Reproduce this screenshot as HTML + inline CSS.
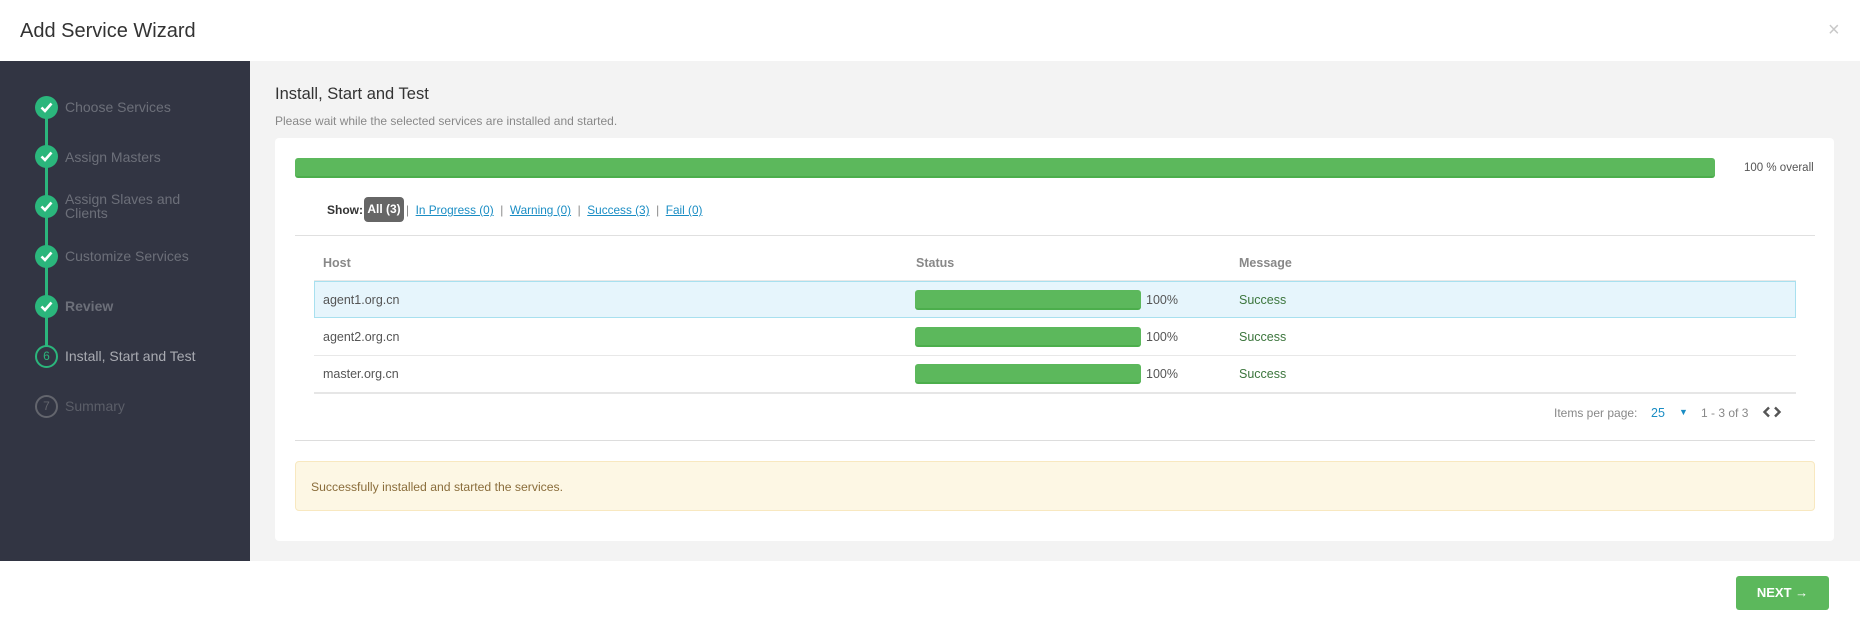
<!DOCTYPE html>
<html><head><meta charset="utf-8"><style>
*{box-sizing:border-box;margin:0;padding:0}
body{width:1860px;height:625px;position:relative;background:#fff;font-family:"Liberation Sans",sans-serif;overflow:hidden}
.a{position:absolute;white-space:nowrap}
.title{left:20px;top:20px;font-size:20px;color:#333}
.close{left:1828px;top:19px;font-size:20px;color:#c8c8c8}
.side{left:0;top:61px;width:250px;height:500px;background:#323543}
.main{left:250px;top:61px;width:1610px;height:500px;background:#f3f3f3}
.line{left:45px;top:107px;width:3px;height:250px;background:#2bb67c}
.c{width:23px;height:23px;border-radius:50%;background:#2bb67c;left:35px}
.c svg{position:absolute;left:5px;top:6px}
.st{left:65px;font-size:14px;color:#6c6f79}
.n{width:23px;height:23px;border-radius:50%;left:35px;border:2px solid #2bb67c;color:#2bb67c;font-size:12px;text-align:center;line-height:19px;background:#323543}
.card{left:275px;top:138px;width:1559px;height:403px;background:#fff;border-radius:4px}
.bar{background:#5cb85c;border-radius:3px;border-bottom:2px solid #4cae4c}
a{color:#1a8dc4;text-decoration:underline}
.sep{color:#888}
.th{top:256px;font-size:12.5px;color:#888;font-weight:bold}
.td{font-size:12.5px;color:#555}
.ok{font-size:12.5px;color:#3c763d}
.hl{left:314px;top:281px;width:1482px;height:37px;background:#e6f5fc;border:1px solid #a8e0ef}
.rl{left:314px;width:1482px;height:1px;background:#e8e8e8}
</style></head><body>
<div class="a title">Add Service Wizard</div>
<div class="a close">×</div>
<div class="a side"></div>
<div class="a main"></div>
<div class="a line"></div>

<div class="a c" style="top:96px"><svg width="13" height="11" viewBox="0 0 13 11"><path d="M1.5 5.5l3.5 3.5 6.5-7.5" stroke="#fff" stroke-width="2.6" fill="none"/></svg></div>
<div class="a st" style="top:99px">Choose Services</div>
<div class="a c" style="top:145px"><svg width="13" height="11" viewBox="0 0 13 11"><path d="M1.5 5.5l3.5 3.5 6.5-7.5" stroke="#fff" stroke-width="2.6" fill="none"/></svg></div>
<div class="a st" style="top:149px">Assign Masters</div>
<div class="a c" style="top:195px"><svg width="13" height="11" viewBox="0 0 13 11"><path d="M1.5 5.5l3.5 3.5 6.5-7.5" stroke="#fff" stroke-width="2.6" fill="none"/></svg></div>
<div class="a st" style="top:192px;line-height:14px">Assign Slaves and<br>Clients</div>
<div class="a c" style="top:245px"><svg width="13" height="11" viewBox="0 0 13 11"><path d="M1.5 5.5l3.5 3.5 6.5-7.5" stroke="#fff" stroke-width="2.6" fill="none"/></svg></div>
<div class="a st" style="top:248px">Customize Services</div>
<div class="a c" style="top:295px"><svg width="13" height="11" viewBox="0 0 13 11"><path d="M1.5 5.5l3.5 3.5 6.5-7.5" stroke="#fff" stroke-width="2.6" fill="none"/></svg></div>
<div class="a st" style="top:298px;font-weight:bold">Review</div>
<div class="a n" style="top:345px">6</div>
<div class="a st" style="top:348px;color:#a9abb2">Install, Start and Test</div>
<div class="a n" style="top:395px;border-color:#63656d;color:#63656d">7</div>
<div class="a st" style="top:398px;color:#5b5e68">Summary</div>

<div class="a" style="left:275px;top:85px;font-size:16.5px;color:#333">Install, Start and Test</div>
<div class="a" style="left:275px;top:114px;font-size:12px;color:#888">Please wait while the selected services are installed and started.</div>
<div class="a card"></div>
<div class="a bar" style="left:295px;top:158px;width:1420px;height:20px"></div>
<div class="a" style="left:1744px;top:162px;font-size:11.5px;color:#555">100 % overall</div>

<div class="a" style="left:327px;top:203px;font-size:12px;color:#333;font-weight:bold">Show:</div>
<div class="a" style="left:364px;top:197px;width:40px;height:25px;background:#666;border-radius:4px;color:#fff;font-size:12px;font-weight:bold;text-align:center;line-height:25px">All (3)</div>
<div class="a" style="left:406px;top:203px;font-size:11.8px"><span class="sep">|</span>&nbsp; <a>In Progress (0)</a> &nbsp;<span class="sep">|</span>&nbsp; <a>Warning (0)</a> &nbsp;<span class="sep">|</span>&nbsp; <a>Success (3)</a> &nbsp;<span class="sep">|</span>&nbsp; <a>Fail (0)</a></div>
<div class="a" style="left:295px;top:235px;width:1520px;height:1px;background:#e0e0e0"></div>

<div class="a th" style="left:323px">Host</div>
<div class="a th" style="left:916px">Status</div>
<div class="a th" style="left:1239px">Message</div>
<div class="a rl" style="top:280px"></div>
<div class="a hl"></div>
<div class="a td" style="left:323px;top:293px">agent1.org.cn</div>
<div class="a bar" style="left:915px;top:290px;width:226px;height:20px"></div>
<div class="a td" style="left:1146px;top:293px">100%</div>
<div class="a ok" style="left:1239px;top:293px">Success</div>
<div class="a td" style="left:323px;top:330px">agent2.org.cn</div>
<div class="a bar" style="left:915px;top:327px;width:226px;height:20px"></div>
<div class="a td" style="left:1146px;top:330px">100%</div>
<div class="a ok" style="left:1239px;top:330px">Success</div>
<div class="a rl" style="top:355px"></div>
<div class="a td" style="left:323px;top:367px">master.org.cn</div>
<div class="a bar" style="left:915px;top:364px;width:226px;height:20px"></div>
<div class="a td" style="left:1146px;top:367px">100%</div>
<div class="a ok" style="left:1239px;top:367px">Success</div>
<div class="a rl" style="top:392px;height:2px;background:#e6e6e6"></div>

<div class="a" style="left:1554px;top:406px;font-size:12px;color:#888">Items per page:</div>
<div class="a" style="left:1651px;top:406px;font-size:12.5px;color:#1a8dc4">25</div>
<div class="a" style="left:1679px;top:407px;font-size:9px;color:#1a8dc4">▼</div>
<div class="a" style="left:1701px;top:406px;font-size:12px;color:#888">1 - 3 of 3</div>
<svg class="a" style="left:1762px;top:406px" width="20" height="12" viewBox="0 0 20 12"><path d="M7 1.5L2.5 6 7 10.5M13 1.5L17.5 6 13 10.5" stroke="#555" stroke-width="2.4" fill="none"/></svg>
<div class="a" style="left:295px;top:440px;width:1520px;height:1px;background:#ddd"></div>

<div class="a" style="left:295px;top:461px;width:1520px;height:50px;background:#fdf7e4;border:1px solid #f8e8c0;border-radius:4px"></div>
<div class="a" style="left:311px;top:480px;font-size:12.2px;color:#8a6d3b">Successfully installed and started the services.</div>

<div class="a" style="left:1736px;top:576px;width:93px;height:34px;background:#5cb85c;border-radius:3px;color:#fff;font-size:13px;font-weight:bold;text-align:center;line-height:34px">NEXT →</div>
</body></html>
